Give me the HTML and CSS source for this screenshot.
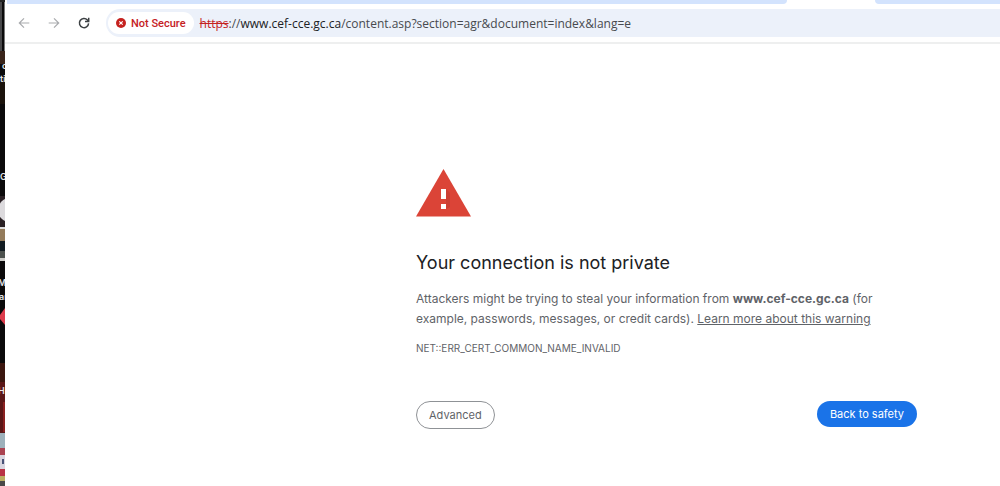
FILE: index.html
```html
<!DOCTYPE html>
<html lang="en">
<head>
<meta charset="utf-8">
<title>Privacy error</title>
<link rel="stylesheet" href="styles.css">
</head>
<body>
<aside class="desktop" aria-hidden="true">
  <svg class="wallpaper" viewBox="0 0 5 486" preserveAspectRatio="none">
    <rect width="5" height="486" fill="#0b0a0b"/>
    <rect width="5" height="2" fill="#222"/>
    <rect y="2" width="2" height="49" fill="#48484a"/>
    <rect x="4" y="2" width="1" height="49" fill="#777"/>
    <rect y="51" width="5" height="13" fill="#39241a"/>
    <rect y="80" width="5" height="24" fill="#1b130c"/>
    <rect y="196" width="5" height="32" fill="#2a2024"/>
    <circle cx="10" cy="210" r="12" fill="#dcdadd"/>
    <rect y="227" width="5" height="2" fill="#ddd"/>
    <rect y="229" width="5" height="12" fill="#947b5b"/>
    <rect y="241" width="5" height="10" fill="#121c22"/>
    <rect y="251" width="5" height="7" fill="#4c514e"/>
    <rect y="258" width="5" height="3" fill="#cdccc8"/>
    <path d="M5 308L0 315V319L5 325Z" fill="#dc3c4c"/>
    <rect y="363" width="5" height="19" fill="#3b160f"/>
    <rect y="382" width="5" height="52" fill="#5b1717"/>
    <rect x="3" y="402" width="2" height="30" fill="#8b2020"/>
    <rect y="433" width="5" height="15" fill="#9db1bb"/>
    <rect y="448" width="5" height="7" fill="#aa4351"/>
    <rect y="455" width="5" height="14" fill="#d8d5df"/>
    <rect x="2" y="459" width="2" height="5" fill="#485277"/>
    <rect y="469" width="5" height="7" fill="#b93446"/>
    <rect y="476" width="5" height="5" fill="#bcae62"/>
    <rect y="481" width="5" height="5" fill="#4a4948"/>
  </svg>
  <span class="label l1">c</span>
  <span class="label l2">ti</span>
  <span class="label l3">G</span>
  <span class="label l4">M</span>
  <span class="label l5">ar</span>
  <span class="label l6">H</span>
</aside>
<div class="browser">
  <div class="tabs"><div class="tabs-before"></div><div class="tab-active"></div><div class="tabs-after"></div></div>
  <header class="toolbar">
    <nav class="nav">
      <button class="icon-btn" aria-label="Back" disabled><svg viewBox="0 0 12 12"><path d="M11.300 6H1.300M6 1.300L1.300 6L6 10.700"/></svg></button>
      <button class="icon-btn" aria-label="Forward" disabled><svg viewBox="0 0 12 12"><path d="M.7 6H10.700M6 1.300L10.700 6L6 10.700"/></svg></button>
      <button class="icon-btn reload" aria-label="Reload"><svg viewBox="0 0 12 12"><path d="M10.600 6.400A4.600 4.600 0 1 1 9.400 2.900L10.600 4.300"/><path d="M10.700 .8V4.500H7"/></svg></button>
    </nav>
    <div class="omnibox">
      <button class="security">
        <svg viewBox="0 0 10 10"><circle cx="5" cy="5" r="5" fill="#c5221f"/><path d="M3.300 3.300L6.700 6.700M6.700 3.300L3.300 6.700" stroke="#fff" stroke-width="1.200"/></svg>
        Not Secure
      </button>
      <div class="url"><s>https</s>://<span class="host">www.cef-cce.gc.ca</span>/content.asp?section=agr&amp;document=index&amp;lang=e</div>
    </div>
  </header>
  <main class="warning">
    <svg class="warning-icon" viewBox="0 0 55 48" aria-hidden="true">
      <path d="M27.500 0L55 47.500H0Z" fill="#db4437"/>
      <path d="M30 20L34 24V38L30 40Z" fill="#c23b30" opacity=".6"/>
      <path d="M25 20H30V30H25ZM25 35H30V40H25Z" fill="#fff"/>
    </svg>
    <h1>Your connection is not private</h1>
    <p class="message">Attackers might be trying to steal your information from <strong>www.cef-cce.gc.ca</strong> (for example, passwords, messages, or credit cards). <a href="#">Learn more about this warning</a></p>
    <p class="code">NET::ERR_CERT_COMMON_NAME_INVALID</p>
    <div class="actions">
      <button class="btn">Advanced</button>
      <button class="btn primary">Back to safety</button>
    </div>
  </main>
</div>
</body>
</html>
```
FILE: styles.css
```css
* { box-sizing: border-box; }
body {
  margin: 0;
  min-height: 100vh;
  display: flex;
  font-family: Inter, "Liberation Sans", sans-serif;
  background: #fff;
  color: #202124;
}
button { font: inherit; border: 0; padding: 0; background: none; }

.desktop { position: relative; flex: 0 0 5px; overflow: hidden; background: #0b0a0b; }
.wallpaper { display: block; width: 5px; height: 100%; }
.label { position: absolute; left: 0; font-size: 9px; line-height: 10px; font-weight: 600; color: #e6e6e6; }
.l1 { top: 61px; left: 2px; }
.l2 { top: 74px; }
.l3 { top: 172px; }
.l4 { top: 278px; left: -2px; }
.l5 { top: 292px; left: -1px; }
.l6 { top: 386px; left: -2px; }

.browser { flex: 1; min-width: 0; background: #fff; }
.tabs { display: flex; height: 4px; margin-left: 2px; }
.tabs-before { flex: 0 0 780px; background: #d3e3fd; border-bottom-right-radius: 4px; }
.tab-active { flex: 0 0 88px; }
.tabs-after { flex: 1; background: #d3e3fd; border-bottom-left-radius: 4px; }

.toolbar {
  display: flex;
  align-items: center;
  height: 40px;
  padding-left: 13px;
  border-bottom: 2px solid #eeefef;
}
.nav { display: flex; gap: 18px; padding-right: 16px; }
.icon-btn { width: 12px; height: 12px; color: #a9abae; }
.icon-btn svg { display: block; width: 12px; height: 12px; fill: none; stroke: currentColor; stroke-width: 1.2; }
.reload { color: #3c4043; }
.reload svg { stroke-width: 1.5; }
.omnibox {
  flex: 1;
  min-width: 0;
  display: flex;
  align-items: center;
  gap: 6px;
  height: 28px;
  padding-left: 2px;
  background: #ecf1fa;
  border-radius: 14px 0 0 14px;
}
.security {
  display: flex;
  align-items: center;
  gap: 5px;
  height: 22px;
  padding: 0 8px;
  border-radius: 11px;
  background: #fff;
  color: #c5221f;
  font-family: Roboto, "Liberation Sans", sans-serif;
  font-size: 11px;
  font-weight: 500;
  white-space: nowrap;
}
.security svg { width: 10px; height: 10px; }
.url { font-family: "Open Sans", "Liberation Sans", sans-serif; font-size: 12px; white-space: nowrap; color: #474a4e; }
.url s { color: #c5221f; }
.host { color: #202124; }

.warning { max-width: 912px; padding: 125px 0 0 411px; }
.warning-icon { display: block; width: 55px; height: 48px; }
h1 { margin: 34px 0 14px; font-size: 18px; line-height: 24px; font-weight: 400; }
p { margin: 0; color: #5f6368; }
.message { font-size: 12px; line-height: 20px; }
.message a { color: inherit; }
.code { margin-top: 11px; font-size: 10px; line-height: 16px; }
.actions { display: flex; justify-content: space-between; align-items: flex-start; margin-top: 45px; }
.btn {
  height: 28px;
  padding: 0 12px;
  border: 1px solid #8f9296;
  border-radius: 14px;
  font-size: 11px;
  color: #5f6368;
}
.primary { height: 26px; padding: 0 13px; border: 0; background: #1a73e8; color: #fff; }
```
